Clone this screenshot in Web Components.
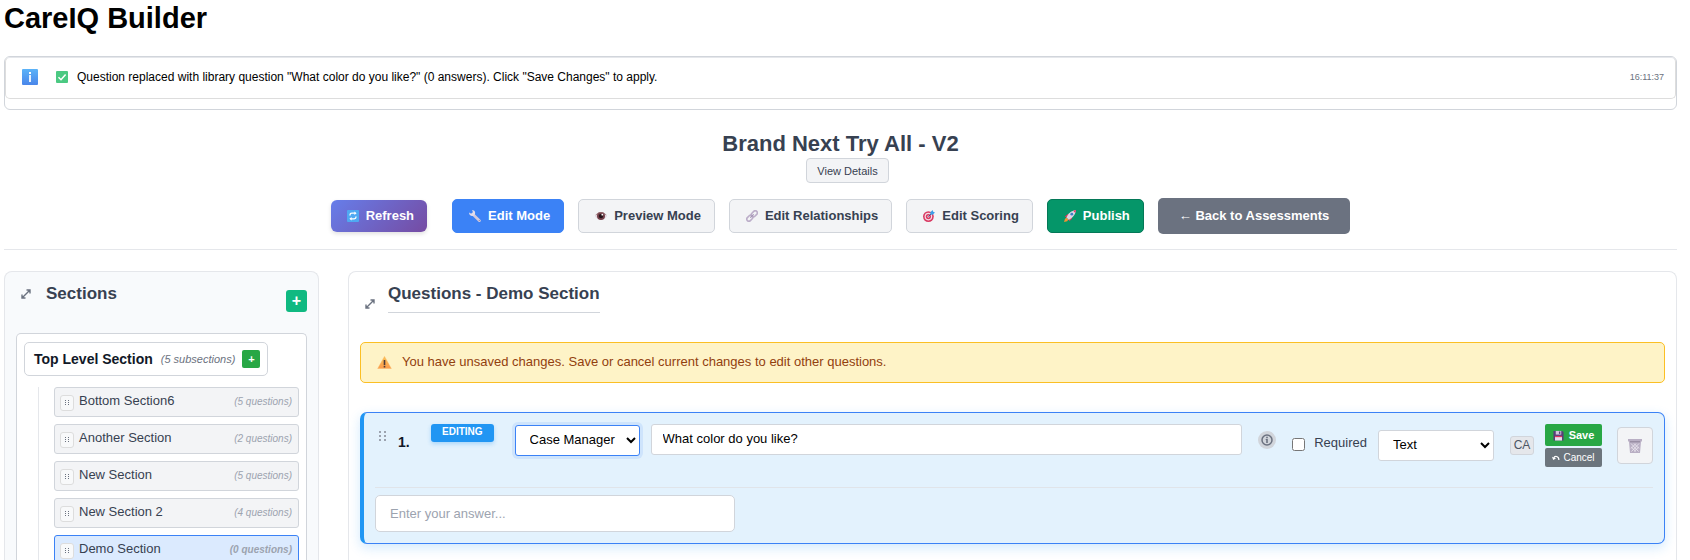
<!DOCTYPE html>
<html lang="en">
<head>
<meta charset="utf-8">
<title>CareIQ Builder</title>
<style>
  body { margin: 0; background: #fff; color: #000; font-family: "Liberation Sans", Arial, sans-serif; font-size: 13px; line-height: 16px; }
</style>
</head>
<body>
<careiq-app></careiq-app>
<script>
const BASE = `
  *, *::before, *::after { box-sizing: border-box; }
  h1, h2, h3, p { margin: 0; }
  button, input, select { font-family: inherit; margin: 0; }
  svg { display: block; }
`;

const ICONS = {
  info: `<svg viewBox="0 0 16 16"><defs><linearGradient id="g" x1="0" y1="0" x2="0" y2="1"><stop offset="0" stop-color="#5cb3f8"/><stop offset="1" stop-color="#4a86ea"/></linearGradient></defs><rect width="16" height="16" rx="1" fill="url(#g)"/><rect x="7" y="3" width="2" height="2" fill="#fff"/><rect x="7" y="6" width="2" height="7" fill="#e6f0fd"/></svg>`,
  check: `<svg viewBox="0 0 12 12"><rect width="12" height="12" rx="1" fill="#4bc982"/><path d="M2.5 6.2 5 8.7 9.6 3.4" fill="none" stroke="#fff" stroke-width="1.5"/></svg>`,
  refresh: `<svg viewBox="0 0 12 12"><rect width="12" height="12" rx="1" fill="#4fa9f2"/><path d="M3 5.6V5a1.8 1.8 0 0 1 1.8-1.8h3.4M9 6.4V7a1.8 1.8 0 0 1-1.8 1.8H3.8" fill="none" stroke="#fff" stroke-width="1.3"/><path d="M7.4 1.4 9.6 3.2 7.4 5zM4.6 7 2.4 8.8l2.2 1.8z" fill="#fff"/></svg>`,
  wrench: `<svg viewBox="0 0 12 12"><path d="M3.6 4 10.5 10.7" stroke="#d3cadd" stroke-width="2.6" stroke-linecap="round"/><path d="M.2 2.400C-.2 4.400 1.400 6.300 3.600 6 5.600 5.700 6.500 3.800 6 2 5.600.8 4.400.100 3 .100L4 2.300 2.500 3.900z" fill="#e3ddeb"/><circle cx="10.300" cy="10.500" r=".6" fill="#8d7fa3"/></svg>`,
  eye: `<svg viewBox="0 0 12 12"><path d="M0 6.300C2 2.200 10 2.200 12 6.300 10 10.300 2 10.300 0 6.300z" fill="#e3d9e2"/><circle cx="6" cy="6.100" r="4" fill="#74404a"/><circle cx="6" cy="6.100" r="2.200" fill="#241319"/><circle cx="7.300" cy="4.700" r=".9" fill="#fff"/><path d="M.8 5.200C2.600 1.700 9.400 1.700 11.200 5.200" fill="none" stroke="#9a6e74" stroke-width=".8"/></svg>`,
  link: `<svg viewBox="0 0 12 12"><g fill="none" stroke="#bcaec9" stroke-width="1.600"><rect x="4.900" y="1.700" width="6.800" height="4.200" rx="2.100" transform="rotate(-45 8.300 3.800)"/><rect x=".4" y="6.100" width="6.800" height="4.200" rx="2.100" transform="rotate(-45 3.800 8.200)"/></g><path d="M4.300 7.700 7.700 4.300" stroke="#a293b3" stroke-width="1.200"/></svg>`,
  target: `<svg viewBox="0 0 12 12"><circle cx="5.400" cy="6.600" r="5.400" fill="#d93a63"/><circle cx="5.400" cy="6.600" r="3.800" fill="#f5dce4"/><circle cx="5.400" cy="6.600" r="2.600" fill="#d93a63"/><circle cx="5.400" cy="6.600" r="1.100" fill="#f5dce4"/><path d="M5.400 6.600 9.200 2.800" stroke="#355d92" stroke-width="1"/><path d="M7.200 2.600 9.600 0 10.200 1.800 12 2.400 9.700 4.800 7.600 4.400z" fill="#3d9ee8"/></svg>`,
  rocket: `<svg viewBox="0 0 12 12"><path d="M.8 6.600 3.800 3.900l2.200 1.100-2.600 3zM5.400 11.200 8.100 8.400 7.500 6 4.400 8.800z" fill="#e0345f"/><path d="M2.400 7.600C4 3.600 7.400.600 12 0 11.500 4.600 8.400 8.300 4.500 9.800z" fill="#ddd6e4"/><path d="M9.200.700 12 0 11.300 3z" fill="#e0345f"/><circle cx="7.800" cy="4.200" r="1.400" fill="#3f7fc4"/><path d="M0 12 1 8.800 2.500 7.800 4.300 9.500 3.200 11.200z" fill="#f59331"/></svg>`,
  expand: `<svg viewBox="0 0 10 10"><path d="M1.500 8.500l7-7M5.500 1h3.500v3.500M1 5.500V9h3.500" fill="none" stroke="#6b7280" stroke-width="1.400"/></svg>`,
  warning: `<svg viewBox="0 0 14 13"><defs><linearGradient id="w" x1="0" y1="0" x2="0" y2="1"><stop offset="0" stop-color="#fbc456"/><stop offset="1" stop-color="#fb9a4b"/></linearGradient></defs><path d="M7 .4 13.800 12.600H.2z" fill="url(#w)" stroke="#fbb05a" stroke-width=".4" stroke-linejoin="round"/><rect x="6.200" y="4" width="1.600" height="5.200" fill="#4b3a3a"/><rect x="6.200" y="10" width="1.600" height="1.500" fill="#4b3a3a"/></svg>`,
  dots: `<svg viewBox="0 0 6 8"><g fill="#6b7280"><path d="M1 1h1v1H1zM1 3h1v1H1zM1 5h1v1H1zM4 1h1v1H4zM4 3h1v1H4zM4 5h1v1H4z"/></g></svg>`,
  grip: `<svg viewBox="0 0 8 11"><g fill="#9ca3af"><path d="M0 0h2v2H0zM0 4h2v2H0zM0 8h2v2H0zM5 0h2v2H5zM5 4h2v2H5zM5 8h2v2H5z"/></g></svg>`,
  circleInfo: `<svg viewBox="0 0 12 12"><circle cx="6" cy="6" r="5" fill="none" stroke="#6b7280" stroke-width="1.500"/><path d="M5.200 2.800h1.600v1.400H5.200zM4.700 5h2.100v4H5.200V6h-.5z" fill="#6b7280"/></svg>`,
  floppy: `<svg viewBox="0 0 12 12"><path d="M.5 1h9.500L11.500 2.500V11.500H.5z" fill="#563f78"/><rect x="3" y="1" width="6" height="4" fill="#cfc6dc"/><rect x="6.500" y="1.600" width="1.500" height="2.600" fill="#563f78"/><rect x="2.200" y="6.500" width="7.600" height="5" fill="#e5dfec"/><rect x="2.200" y="6.500" width="7.600" height="1.300" fill="#e0345f"/></svg>`,
  undo: `<svg viewBox="0 0 8 8"><path d="M1.800 4.300C2.300 1.700 6.900 1.500 6.900 6" fill="none" stroke="#fff" stroke-width="1.200"/><path d="M0 2.800 1.200 6 4 4.500z" fill="#fff"/></svg>`,
  trash: `<svg viewBox="0 0 14 14"><path d="M0 0h14v2.500h-1L12 14H2L1 2.500H0z" fill="#b9afc4"/><path d="M2 2.800h10" stroke="#8e8299"/><path d="M3 4.500 10.500 12.500M6 4.500 11 9.500M3.200 8 8 12.500M11 4.500 3.500 12.500M8 4.500 3 9.500M10.800 8 6 12.500" stroke="#efebf3" stroke-width=".8"/></svg>`
};

function define(name, css, html) {
  customElements.define(name, class extends HTMLElement {
    constructor() {
      super();
      this.attachShadow({ mode: 'open' });
    }
    connectedCallback() {
      if (this.shadowRoot.firstChild) return;
      const t = document.createElement('template');
      t.innerHTML = `<style>${BASE}${css}</style>${typeof html === 'function' ? html(this) : html}`;
      this.shadowRoot.append(t.content.cloneNode(true));
    }
  });
}

define('ui-icon', `
  :host { display: inline-block; flex: none; width: var(--w, 12px); height: var(--h, 12px); }
  svg { width: 100%; height: 100%; }
`, el => ICONS[el.getAttribute('name')].replace('<svg', '<svg aria-hidden="true"'));

define('status-messages', `
  :host { display: block; height: 54px; border: 1px solid #d1d5db; border-radius: 6px; }
  .message { display: flex; align-items: center; height: 42px; padding: 0 11px 2px 16px; border: 1px solid #ddd; border-top-color: #e5e7eb; border-radius: 5px; font-size: 12px; }
  .info { --w: 16px; --h: 16px; margin-right: 18px; }
  .check { margin-right: 9px; }
  time { margin-left: auto; font-size: 9px; color: #6b7280; }
`, `<div class="message" role="status">
  <ui-icon class="info" name="info"></ui-icon><ui-icon class="check" name="check"></ui-icon>
  <slot></slot><time>16:11:37</time></div>`);

define('tool-button', `
  :host { display: block; }
  button { display: flex; align-items: center; gap: 7px; height: 34px; padding: 0 13px 0 16px; border: 1px solid #d1d5db; border-radius: 5px; background: #f3f4f6; color: #374151; font-size: 13px; font-weight: 700; line-height: 16px; white-space: nowrap; }
  :host([kind=refresh]) button { height: 32px; border: 0; border-radius: 6px; color: #fff; background: linear-gradient(135deg, #667eea, #764ba2); box-shadow: 0 2px 4px rgba(0,0,0,.12); }
  :host([kind=active]) button { background: #3b82f6; border-color: #3b82f6; color: #fff; }
  :host([kind=publish]) button { background: #059669; border-color: #047857; color: #fff; }
  :host([kind=back]) button { height: 36px; padding: 0 21px; border: 0; background: #6b7280; color: #fff; }
`, el => `<button type="button">${el.getAttribute('icon') ? `<ui-icon name="${el.getAttribute('icon')}"></ui-icon>` : ''}<span><slot></slot></span></button>`);

define('builder-header', `
  :host { display: flex; flex-direction: column; align-items: center; border-bottom: 1px solid #e5e7eb; padding-bottom: 15px; }
  h2 { font-size: 22px; line-height: 28px; color: #374151; }
  .details { height: 25px; padding: 0 10px; border: 1px solid #d1d5db; border-radius: 4px; background: #f3f4f6; color: #374151; font-size: 11px; margin: 0 0 15px 14px; }
  nav { display: flex; align-items: center; gap: 14px; }
  .first { margin-right: 11px; }
`, `<h2>Brand Next Try All - V2</h2>
<button type="button" class="details">View Details</button>
<nav aria-label="Builder actions">
  <tool-button class="first" kind="refresh" icon="refresh">Refresh</tool-button>
  <tool-button kind="active" icon="wrench">Edit Mode</tool-button>
  <tool-button icon="eye">Preview Mode</tool-button>
  <tool-button icon="link">Edit Relationships</tool-button>
  <tool-button icon="target">Edit Scoring</tool-button>
  <tool-button kind="publish" icon="rocket">Publish</tool-button>
  <tool-button kind="back">← Back to Assessments</tool-button>
</nav>`);

define('section-item', `
  :host { display: flex; align-items: center; height: 30px; padding: 0 6px 0 5px; border: 1px solid #d1d5db; border-radius: 3px; background: #f3f4f6; color: #374151; }
  :host([selected]) { background: #dbeafe; border-color: #3b82f6; }
  .handle { display: grid; place-items: center; width: 14px; height: 16px; padding: 0; margin: 2px 5px 0 0; border: 1px solid #ddd; border-radius: 3px; background: #f8f9fa; --w: 6px; --h: 8px; }
  .count { margin-left: auto; font-size: 10px; font-style: italic; color: #9ca3af; }
  :host([selected]) .count { font-weight: 700; }
  .name { padding-bottom: 3px; }
`, el => `<button type="button" class="handle" aria-label="Move section"><ui-icon name="dots"></ui-icon></button>
<span class="name"><slot></slot></span><span class="count">(${el.getAttribute('count')} questions)</span>`);

define('sections-panel', `
  :host { display: block; padding: 10px 11px; border: 1px solid #e5e7eb; border-bottom: 0; border-radius: 8px 8px 0 0; background: #f8fafc; }
  header { display: flex; align-items: flex-start; padding: 0 0 0 5px; height: 51px; --w: 10px; --h: 10px; }
  header ui-icon { margin: 7px 15px 0 0; }
  h3 { font-size: 17px; line-height: 24px; color: #374151; }
  .add { display: grid; place-items: center; margin: 8px 0 0 auto; width: 21px; height: 22px; padding: 0; border: 0; border-radius: 3px; background: #10b981; color: #fff; font-size: 16px; font-weight: 700; line-height: 16px; }
  .tree { height: 100%; padding: 8px 7px; border: 1px solid #d1d5db; border-bottom: 0; border-radius: 5px 5px 0 0; background: #fff; }
  .top { display: flex; align-items: center; width: max-content; height: 34px; padding: 0 7px 0 9px; border: 1px solid #d1d5db; border-radius: 5px; color: #111827; font-size: 14px; font-weight: 700; }
  .top em { margin: 0 7px 0 8px; font-size: 11px; font-weight: 400; color: #6b7280; }
  .top button { display: grid; place-items: center; width: 18px; height: 18px; padding: 0; border: 0; border-radius: 2px; background: #28a745; color: #fff; font-size: 11px; font-weight: 700; }
  .children { display: flex; flex-direction: column; gap: 7px; margin: 11px 0 0 14px; padding-left: 15px; border-left: 1px solid #e5e7eb; }
`, `<header><ui-icon name="expand"></ui-icon><h3>Sections</h3><button type="button" class="add" aria-label="Add section">+</button></header>
<div class="tree">
  <div class="top"><span>Top Level Section</span><em>(5 subsections)</em><button type="button" aria-label="Add subsection">+</button></div>
  <div class="children">
    <section-item count="5">Bottom Section6</section-item>
    <section-item count="2">Another Section</section-item>
    <section-item count="5">New Section</section-item>
    <section-item count="4">New Section 2</section-item>
    <section-item count="0" selected>Demo Section</section-item>
  </div>
</div>`);

define('question-card', `
  :host { display: block; padding: 11px; border: 1px solid #3b82f6; border-left: 4px solid #2196f3; border-radius: 7px; background: #e3f2fd; box-shadow: 0 4px 12px rgba(33,150,243,.2); }
  .row { display: flex; align-items: flex-start; height: 64px; border-bottom: 1px solid #e0e4e9; }
  .grip { --w: 8px; --h: 11px; margin: 7px 11px 0 4px; }
  .number { width: 33px; padding-top: 10px; font-size: 14px; font-weight: 700; color: #111827; }
  .badge { height: 18px; padding: 0 11px; border-radius: 3px; background: #2196f3; box-shadow: 0 2px 4px rgba(33,150,243,.3); color: #fff; font-size: 10px; font-weight: 700; line-height: 16px; }
  select, input[type=text] { height: 31px; border: 1px solid #d1d5db; border-radius: 3px; background-color: #fff; color: #000; font-size: 13px; outline: 0; }
  select { padding: 0 0 2px 10px; }
  .role { width: 125px; margin: 1px 11px 0 21px; border-color: #3b82f6; box-shadow: 0 0 0 3px rgba(59,130,246,.12); }
  .question { flex: 1; min-width: 0; padding: 0 11px 2px; }
  .hint { display: grid; place-items: center; width: 18px; height: 18px; margin: 7px 16px 0; padding: 0; border: 0; border-radius: 50%; background: #d1d5db; }
  label { display: flex; color: #374151; margin: 11px 11px 0 0; }
  label input { width: 13px; height: 13px; margin: 3px 9px 0 0; }
  .type { width: 116px; margin: 6px 16px 0 0; }
  .tag { width: 24px; height: 19px; margin: 12px 11px 0 0; border: 1px solid #d1d5db; border-radius: 3px; background: #e5e7eb; color: #4b5563; font-size: 12px; line-height: 17px; text-align: center; }
  .actions { display: grid; gap: 2px; width: 57px; margin-right: 15px; }
  .actions button { display: flex; align-items: center; justify-content: center; height: 22px; padding: 0; border: 0; border-radius: 2px; background: #28a745; color: #fff; font-size: 11px; font-weight: 700; gap: 5px; --w: 11px; --h: 11px; }
  .actions .cancel { height: 19px; background: #6c757d; font-size: 10px; font-weight: 400; gap: 3px; --w: 8px; --h: 8px; }
  .delete { display: grid; place-items: center; width: 36px; height: 37px; margin-top: 3px; padding: 0; border: 1px solid #d1d5db; border-radius: 4px; background: #f3f4f6; --w: 14px; --h: 14px; }
  input.answer { display: block; width: 360px; max-width: 100%; height: 37px; margin-top: 7px; padding: 0 14px; border-radius: 5px; }
  .answer::placeholder { color: #9ca3af; }
`, `<div class="row">
  <ui-icon class="grip" name="grip"></ui-icon><span class="number">1.</span><span class="badge">EDITING</span>
  <select class="role" aria-label="Role"><option>Case Manager</option></select>
  <input class="question" type="text" aria-label="Question text" value="What color do you like?">
  <button type="button" class="hint" aria-label="Question information"><ui-icon name="circleInfo"></ui-icon></button>
  <label><input type="checkbox"><span>Required</span></label>
  <select class="type" aria-label="Answer type"><option>Text</option></select>
  <span class="tag">CA</span>
  <div class="actions">
    <button type="button"><ui-icon name="floppy"></ui-icon><span>Save</span></button>
    <button type="button" class="cancel"><ui-icon name="undo"></ui-icon><span>Cancel</span></button>
  </div>
  <button type="button" class="delete" aria-label="Delete question"><ui-icon name="trash"></ui-icon></button>
</div>
<input class="answer" type="text" aria-label="Answer" placeholder="Enter your answer...">`);

define('questions-panel', `
  :host { display: block; padding: 10px 11px; border: 1px solid #e5e7eb; border-bottom: 0; border-radius: 8px 8px 0 0; background: #fff; }
  header { display: flex; align-items: flex-end; width: max-content; padding-left: 5px; --w: 10px; --h: 10px; }
  header ui-icon { margin: 0 13px 4px 0; }
  h3 { height: 31px; border-bottom: 1px solid #d1d5db; font-size: 17px; line-height: 24px; color: #374151; }
  .warning { display: flex; align-items: center; height: 41px; margin: 29px 0; padding: 0 16px 2px; border: 1px solid #fbbf24; border-radius: 5px; background: #fef3c7; color: #92400e; gap: 10px; --w: 15px; --h: 13px; }
  .warning ui-icon { margin-top: 2px; }
`, `<header><ui-icon name="expand"></ui-icon><h3>Questions - Demo Section</h3></header>
<p class="warning"><ui-icon name="warning"></ui-icon><span>You have unsaved changes. Save or cancel current changes to edit other questions.</span></p>
<question-card></question-card>`);

define('careiq-app', `
  :host { display: flex; flex-direction: column; height: 100vh; overflow: hidden; padding: 0 13px 0 4px; }
  h1 { font-size: 29px; line-height: 36px; margin-bottom: 20px; }
  status-messages { margin-bottom: 20px; flex: none; }
  main { display: grid; grid-template-columns: minmax(300px, 315fr) 1329fr; gap: 29px; margin-top: 21px; flex: 1; min-height: 0; }
`, `<h1>CareIQ Builder</h1>
<status-messages>Question replaced with library question "What color do you like?" (0 answers). Click "Save Changes" to apply.</status-messages>
<builder-header></builder-header>
<main><sections-panel></sections-panel><questions-panel></questions-panel></main>`);
</script>
</body>
</html>
